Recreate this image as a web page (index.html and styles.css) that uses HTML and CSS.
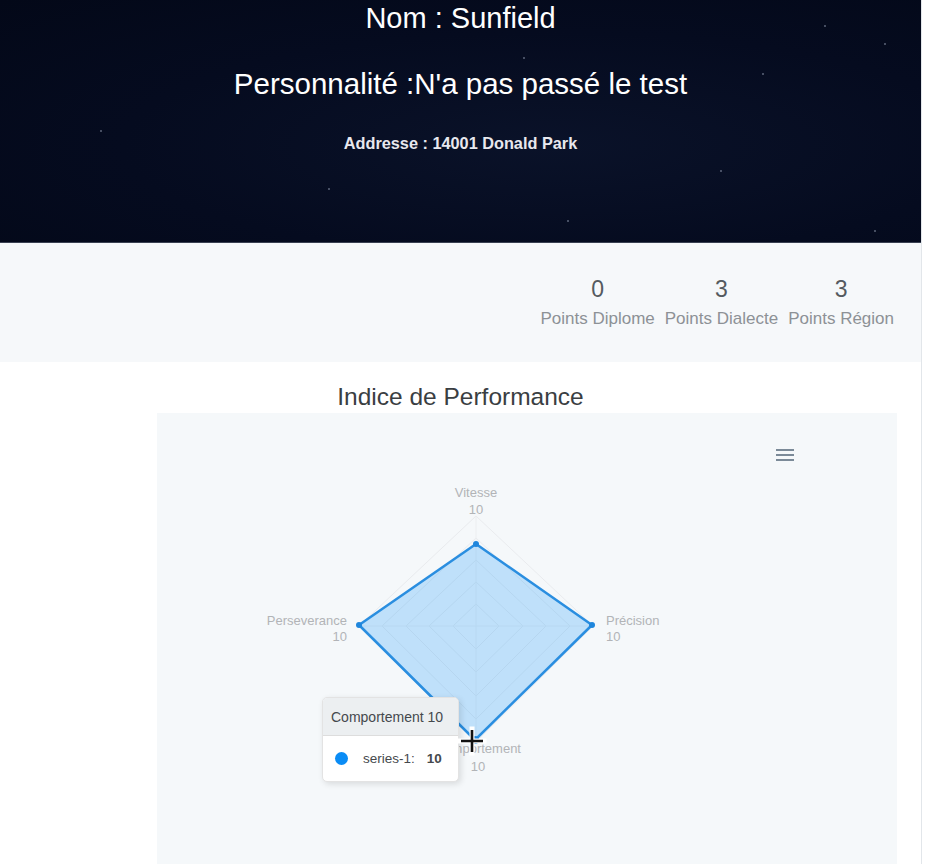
FILE: index.html
```html
<!DOCTYPE html>
<html lang="fr">
<head>
<meta charset="utf-8">
<title>Sunfield</title>
<link rel="stylesheet" href="styles.css">
</head>
<body>
<div class="page">
  <header class="hero">
    <span class="star" style="left:824px;top:25px"></span>
    <span class="star" style="left:884px;top:43px"></span>
    <span class="star" style="left:762px;top:73px"></span>
    <span class="star" style="left:523px;top:57px"></span>
    <span class="star" style="left:328px;top:188px"></span>
    <span class="star" style="left:567px;top:220px"></span>
    <span class="star" style="left:874px;top:230px"></span>
    <span class="star" style="left:720px;top:170px"></span>
    <span class="star" style="left:100px;top:130px"></span>
    <h1 class="hero-name">Nom : Sunfield</h1>
    <h2 class="hero-perso">Personnalité :N'a pas passé le test</h2>
    <p class="hero-address">Addresse : 14001 Donald Park</p>
  </header>

  <section class="stats">
    <div class="stat">
      <div class="stat-value">0</div>
      <div class="stat-label">Points Diplome</div>
    </div>
    <div class="stat">
      <div class="stat-value">3</div>
      <div class="stat-label">Points Dialecte</div>
    </div>
    <div class="stat">
      <div class="stat-value">3</div>
      <div class="stat-label">Points Région</div>
    </div>
  </section>

  <section class="perf">
    <h3 class="perf-title">Indice de Performance</h3>
    <div class="chart-card">
      <svg class="radar" viewBox="157 413 740 470" width="740" height="470">
        <g class="grid">
          <polygon points="476,516 593,626 476,742 359,626"/>
          <polygon points="476,538 570,626 476,719 382,626"/>
          <polygon points="476,560 546,626 476,696 406,626"/>
          <polygon points="476,582 523,626 476,672 429,626"/>
          <polygon points="476,604 499,626 476,649 453,626"/>
          <line x1="476" y1="626" x2="476" y2="516"/>
          <line x1="476" y1="626" x2="593" y2="626"/>
          <line x1="476" y1="626" x2="476" y2="742"/>
          <line x1="476" y1="626" x2="359" y2="626"/>
        </g>
        <polygon class="area" points="476,544 592,625 475,740 359,625"/>
        <g class="markers">
          <circle cx="476" cy="544" r="3"/>
          <circle cx="592" cy="625" r="3"/>
          <circle cx="475" cy="740" r="4"/>
          <circle cx="359" cy="625" r="3"/>
        </g>
        <g class="labels">
          <text x="476" y="497" text-anchor="middle">Vitesse</text>
          <text x="476" y="514" text-anchor="middle">10</text>
          <text x="606" y="625">Précision</text>
          <text x="606" y="641">10</text>
          <text x="347" y="625" text-anchor="end">Perseverance</text>
          <text x="347" y="641" text-anchor="end">10</text>
          <text x="478" y="753" text-anchor="middle">Comportement</text>
          <text x="478" y="771" text-anchor="middle">10</text>
        </g>
      </svg>
      <div class="menu-icon">
        <span></span><span></span><span></span>
      </div>
      <div class="tooltip">
        <div class="tooltip-title">Comportement 10</div>
        <div class="tooltip-body">
          <span class="tooltip-dot"></span>
          <span class="tooltip-name">series-1:</span>
          <span class="tooltip-value">10</span>
        </div>
      </div>
      <svg class="cursor" width="30" height="30" viewBox="0 0 30 30">
        <path d="M15 3 V27 M3 15 H27" stroke="#fff" stroke-width="5" stroke-linecap="square"/>
        <path d="M15 4 V26 M4 15 H26" stroke="#111" stroke-width="2.6"/>
      </svg>
    </div>
  </section>
</div>
</body>
</html>
```

FILE: styles.css
```css
* { box-sizing: border-box; }

html, body {
  margin: 0;
  padding: 0;
  background: #ffffff;
}

body {
  font-family: "Liberation Sans", Arial, Helvetica, sans-serif;
  height: 864px;
  overflow: hidden;
}

.page {
  width: 922px;
  border-right: 1px solid #e2e6ea;
  min-height: 864px;
}

.hero {
  position: relative;
  height: 243px;
  background: radial-gradient(ellipse at 60% 60%, #0a1229 0%, #050b1f 55%, #030818 100%);
  border-bottom: 1px solid #3a4152;
  color: #ffffff;
  text-align: center;
  overflow: hidden;
}

.star {
  position: absolute;
  width: 2px;
  height: 2px;
  border-radius: 50%;
  background: rgba(200, 210, 230, 0.45);
}

.hero-name {
  margin: 0;
  font-size: 29px;
  font-weight: normal;
  line-height: 36px;
}

.hero-perso {
  margin: 30px 0 0;
  font-size: 29.5px;
  font-weight: normal;
  line-height: 36px;
}

.hero-address {
  margin: 31px 0 0;
  font-size: 16.3px;
  font-weight: bold;
  line-height: 20px;
  color: #e8e8ee;
}

.stats {
  height: 119px;
  background: #f6f8fa;
  display: flex;
  justify-content: flex-end;
  gap: 10px;
  padding: 32px 27px 0 0;
}

.stat {
  display: flex;
  flex-direction: column;
  align-items: center;
}

.stat-value {
  font-size: 23px;
  line-height: 28px;
  color: #555a5f;
}

.stat-label {
  margin-top: 6px;
  font-size: 17px;
  line-height: 20px;
  color: #8d9196;
}

.perf {
  padding-top: 21px;
}

.perf-title {
  margin: 0 0 2px;
  text-align: center;
  font-size: 24.5px;
  font-weight: normal;
  line-height: 28px;
  color: #3a3e42;
}

.chart-card {
  position: relative;
  margin-left: 157px;
  width: 740px;
  height: 470px;
  background: #f5f8fa;
}

.radar {
  display: block;
}

.grid polygon {
  fill: none;
  stroke: #e9ebee;
  stroke-width: 1;
}

.grid line {
  stroke: #eceef0;
  stroke-width: 1;
}

.area {
  fill: rgba(0, 143, 251, 0.22);
  stroke: #2a8ee0;
  stroke-width: 2.5;
  stroke-linejoin: round;
}

.markers circle {
  fill: #1f86dc;
}

.labels text {
  font-family: "Liberation Sans", Arial, sans-serif;
  font-size: 13px;
  fill: #b2b4b7;
}

.menu-icon {
  position: absolute;
  left: 619px;
  top: 36px;
  width: 18px;
  display: flex;
  flex-direction: column;
  gap: 3px;
}

.menu-icon span {
  display: block;
  height: 2px;
  background: #7b8a98;
}

.tooltip {
  position: absolute;
  left: 165px;
  top: 284px;
  width: 137px;
  background: #ffffff;
  border: 1px solid #e3e3e3;
  border-radius: 5px;
  box-shadow: 2px 2px 6px rgba(0, 0, 0, 0.12);
  overflow: hidden;
  font-size: 14px;
}

.tooltip-title {
  height: 38px;
  line-height: 38px;
  padding-left: 8px;
  background: #eceff1;
  border-bottom: 1px solid #dddddd;
  color: #45494d;
  white-space: nowrap;
}

.tooltip-body {
  display: flex;
  align-items: center;
  height: 45px;
  padding-left: 12px;
  color: #45494d;
  font-size: 13.5px;
}

.tooltip-dot {
  width: 13px;
  height: 13px;
  border-radius: 50%;
  background: #0a8cf5;
  margin-right: 15px;
}

.tooltip-name {
  margin-right: 12px;
}

.tooltip-value {
  font-weight: bold;
}

.cursor {
  position: absolute;
  left: 300px;
  top: 313px;
}
```
